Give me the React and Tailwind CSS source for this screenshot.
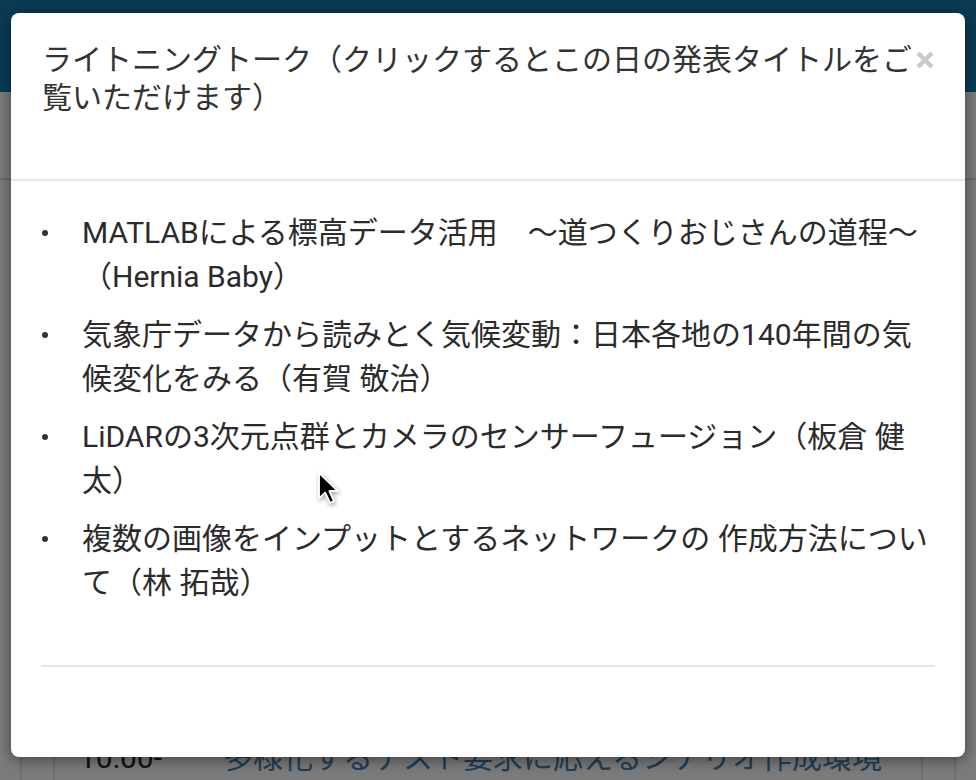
import React from "react";

const talks = [
  "MATLABによる標高データ活用　～道つくりおじさんの道程～（Hernia Baby）",
  "気象庁データから読みとく気候変動：日本各地の140年間の気候変化をみる（有賀 敬治）",
  "LiDARの3次元点群とカメラのセンサーフュージョン（板倉 健太）",
  "複数の画像をインプットとするネットワークの 作成方法について（林 拓哉）",
];

const font = { fontFamily: "Roboto, 'Noto Sans CJK JP', sans-serif" };

function CloseIcon() {
  return (
    <svg width="20" height="20" viewBox="0 0 20 20">
      <path d="M3 3 L17 17 M17 3 L3 17" stroke="#c9c9c9" strokeWidth="4.5" strokeLinecap="butt" />
    </svg>
  );
}

function Cursor() {
  return (
    <svg width="28" height="36" viewBox="0 0 16 21" className="absolute left-[317px] top-[471px] drop-shadow-[1px_2px_2px_rgba(0,0,0,0.35)]">
      <path
        d="M1 1 L1 16 L4.6 12.6 L7.4 18.6 L9.8 17.6 L7.1 11.7 L12 11.7 Z"
        fill="#000"
        stroke="#fff"
        strokeWidth="1.1"
        strokeLinejoin="round"
      />
    </svg>
  );
}

export default function App() {
  return (
    <div className="relative w-[976px] h-[780px] overflow-hidden bg-[#7b7b7b] flex flex-col" style={font}>
      {/* page behind the dialog, already dimmed */}
      <div className="h-[92px] bg-[#0b3a53] shrink-0" />
      <div className="h-[86px] shrink-0" />
      <div className="flex-1 border-t-2 border-[#6a6a6a] flex flex-col">
        <div className="flex-1 mx-[20px] border-x-2 border-[#6e6e6e] flex flex-col">
          <div className="flex-1 mx-[31px] border-x-2 border-[#6e6e6e] flex flex-col justify-end">
            <div className="h-[42px] flex items-start pl-[24px] text-[30px] leading-[40px]">
              <span className="text-[#111] w-[144px]">10:00-</span>
              <span className="text-[#1f3e57]">多様化するテスト要求に応えるシナリオ作成環境</span>
            </div>
          </div>
        </div>
      </div>

      {/* dialog */}
      <div className="absolute left-[11px] top-[13px] w-[954px] h-[744px] bg-white rounded-[8px] shadow-[0_3px_14px_rgba(0,0,0,0.45)] flex flex-col">
        <div className="h-[168px] shrink-0 pl-[31px] pr-[30px] pt-[28px] flex items-start border-b-2 border-[#e5e5e5]">
          <h4 className="flex-1 text-[30px] leading-[38px] text-[#333]">
            ライトニングトーク（クリックするとこの日の発表タイトルをご覧いただけます）
          </h4>
          <button className="w-[20px] mt-[9px]">
            <CloseIcon />
          </button>
        </div>
        <div className="px-[30px] pt-[30px]">
          <ul className="flex flex-col gap-[14px] pr-[3px]">
            {talks.map((t) => (
              <li key={t} className="flex text-[30px] leading-[44px] text-[#2b2b2b]">
                <span className="w-[41px] shrink-0">
                  <span className="block w-[6px] h-[6px] rounded-full bg-[#333] ml-[1px] mt-[19px]" />
                </span>
                <span className="flex-1">{t}</span>
              </li>
            ))}
          </ul>
          <div className="mt-[60px] border-t-2 border-[#e5e5e5]" />
        </div>
      </div>

      <Cursor />
    </div>
  );
}
